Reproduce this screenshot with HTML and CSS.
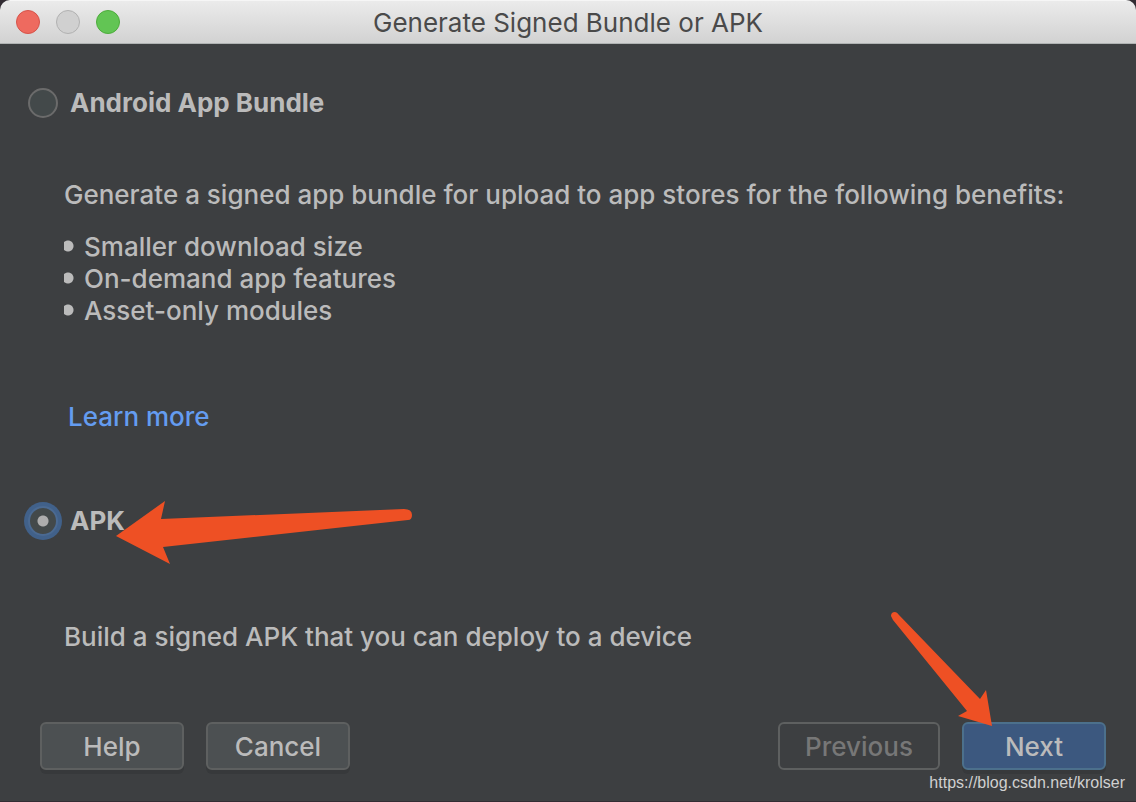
FILE: index.html
```
<!DOCTYPE html>
<html lang="en">
<head>
    <meta charset="UTF-8">
    <meta name="viewport" content="width=device-width, initial-scale=1.0">
    <title>Generate Signed Bundle or APK</title>
    <link rel="stylesheet" href="styles.css">
</head>
<body>
    <form class="window">
        <header class="titlebar">
            <div class="lights">
                <button type="button" class="light close" aria-label="Close"></button>
                <button type="button" class="light minimize" aria-label="Minimize" disabled></button>
                <button type="button" class="light zoom" aria-label="Zoom"></button>
            </div>
            <h1>Generate Signed Bundle or APK</h1>
        </header>
        <main class="content">
            <div class="option">
                <input type="radio" name="type" id="bundle" value="bundle">
                <label for="bundle">Android App Bundle</label>
            </div>
            <div class="details">
                <p>Generate a signed app bundle for upload to app stores for the following benefits:</p>
                <ul>
                    <li>Smaller download size</li>
                    <li>On-demand app features</li>
                    <li>Asset-only modules</li>
                </ul>
                <a href="#" class="learn">Learn more</a>
            </div>
            <div class="option">
                <input type="radio" name="type" id="apk" value="apk" checked>
                <label for="apk">APK</label>
                <svg class="arrow arrow-apk" width="300" height="70" viewBox="0 0 300 70" aria-hidden="true">
                    <path d="M2 38L51 3L47 21L290 11Q298 11 298 17Q298 22 294 22L49 49L56 66Z"/>
                </svg>
            </div>
            <div class="details details-apk">
                <p>Build a signed APK that you can deploy to a device</p>
            </div>
        </main>
        <footer class="buttons">
            <button type="button">Help</button>
            <button type="button">Cancel</button>
            <button type="button" class="previous" disabled>Previous</button>
            <div class="next-wrap">
                <button type="submit" class="next">Next</button>
                <svg class="arrow arrow-next" width="104" height="116" viewBox="0 0 104 116" aria-hidden="true">
                    <path d="M1 6Q1 2 5 2Q7 2 9 5L90 89L96 80L102 116L68 106L77 101L3 10Z"/>
                </svg>
            </div>
        </footer>
        <div class="watermark">https://blog.csdn.net/krolser</div>
    </form>
</body>
</html>
```

FILE: styles.css
```
* {
    box-sizing: border-box;
}
body {
    margin: 0;
    background-color: #322c33;
    font-family: Inter, "Liberation Sans", sans-serif;
    font-size: 26px;
    font-weight: 500;
    line-height: 32px;
    color: #bbbbbb;
}
.window {
    position: relative;
    display: flex;
    flex-direction: column;
    min-height: 100vh;
    background-color: #3d3f41;
    border-bottom: 1px solid #322c33;
    border-radius: 10px 10px 0 0;
    overflow: hidden;
}
.titlebar {
    display: grid;
    grid-template-columns: 1fr auto 1fr;
    align-items: center;
    height: 44px;
    padding: 0 16px;
    background: linear-gradient(#ebebeb, #d2d2d2);
    border-top: 1px solid #f6f6f6;
    border-bottom: 1px solid #b0b3b3;
}
.titlebar h1 {
    margin: 0;
    padding-top: 2px;
    font-size: 26px;
    font-weight: 400;
    color: #4a4a4a;
}
.lights {
    display: flex;
    gap: 16px;
}
.light {
    width: 24px;
    height: 24px;
    padding: 0;
    border: 1px solid;
    border-radius: 50%;
}
.close {
    background-color: #ee6a5f;
    border-color: #d6534a;
}
.minimize {
    background-color: #d0d0d0;
    border-color: #b1b1b1;
}
.zoom {
    background-color: #62c554;
    border-color: #4dac3c;
}
.content {
    padding: 43px 28px 0;
}
.option {
    position: relative;
    display: flex;
    align-items: center;
    gap: 12px;
    font-weight: 700;
}
.option input {
    appearance: none;
    width: 30px;
    height: 30px;
    margin: 0;
    background-color: #43494a;
    border: 2px solid #6b6b6b;
    border-radius: 50%;
}
.option input:checked {
    background-image: radial-gradient(circle, #adadad 5px, transparent 6px);
    border-color: #4b6a92;
    box-shadow: 0 0 0 4px #41618a;
}
/* text block under each radio */
.details {
    padding: 60px 0 72px 36px;
}
.details-apk {
    padding: 84px 0 0 36px;
}
.details p {
    margin: 0;
}
.details ul {
    margin: 20px 0 74px;
    padding: 0;
    list-style: none;
}
.details li {
    display: flex;
    align-items: center;
    gap: 10px;
}
/* round bullet, cut off on the left */
.details li::before {
    content: "";
    width: 10px;
    height: 12px;
    margin-bottom: 2px;
    background: radial-gradient(circle at 4px 6px, #bbbbbb 5px, transparent 6px);
}
.learn {
    display: block;
    width: max-content;
    margin-left: 4px;
    color: #649cf0;
    text-decoration: none;
}
.buttons {
    display: flex;
    gap: 22px;
    margin-top: auto;
    padding: 40px 30px 31px 40px;
}
.buttons button {
    min-width: 144px;
    height: 48px;
    padding: 2px 20px 0;
    font: inherit;
    color: #bbbbbb;
    background-color: #4c5052;
    border: 2px solid #5e6060;
    border-radius: 6px;
    box-shadow: 0 4px 0 #37393b;
}
.buttons .previous {
    min-width: 162px;
    margin-left: auto;
    color: #777777;
    background-color: transparent;
    box-shadow: none;
}
.buttons .next {
    background-color: #3c587f;
    border-color: #4c708c;
}
.next-wrap {
    position: relative;
}
.arrow {
    position: absolute;
    fill: #ee5024;
    pointer-events: none;
}
.arrow-apk {
    left: 86px;
    top: -7px;
}
.arrow-next {
    right: 112px;
    bottom: 44px;
}
.watermark {
    position: absolute;
    right: 11px;
    bottom: 8px;
    font-family: "Liberation Sans", Arial, sans-serif;
    font-size: 16px;
    line-height: 20px;
    font-weight: 400;
    color: #d0d0d0;
}
```
